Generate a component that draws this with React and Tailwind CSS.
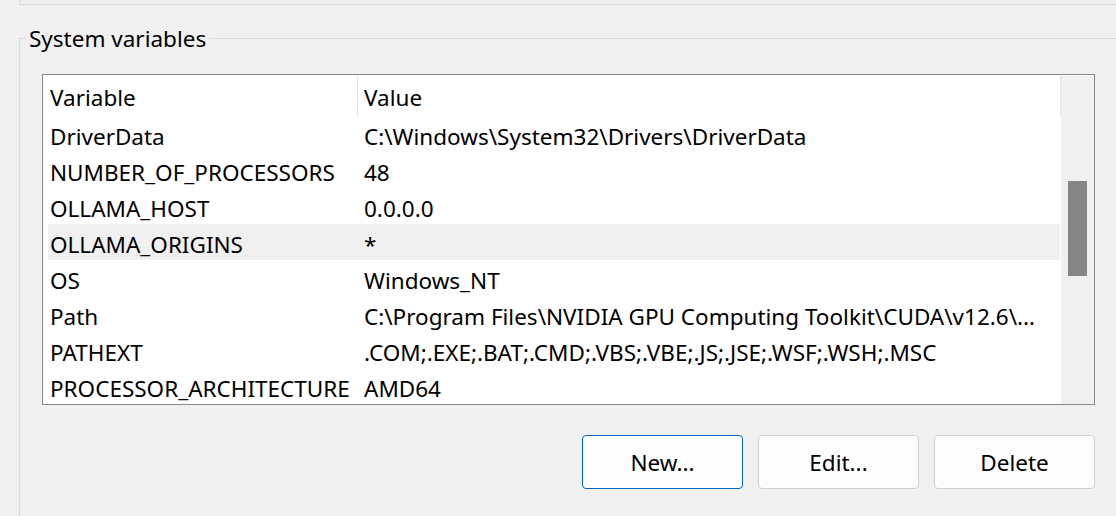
import React from 'react';

const rows = [
  ['DriverData', 'C:\\Windows\\System32\\Drivers\\DriverData'],
  ['NUMBER_OF_PROCESSORS', '48'],
  ['OLLAMA_HOST', '0.0.0.0'],
  ['OLLAMA_ORIGINS', '*'],
  ['OS', 'Windows_NT'],
  ['Path', 'C:\\Program Files\\NVIDIA GPU Computing Toolkit\\CUDA\\v12.6\\...'],
  ['PATHEXT', '.COM;.EXE;.BAT;.CMD;.VBS;.VBE;.JS;.JSE;.WSF;.WSH;.MSC'],
  ['PROCESSOR_ARCHITECTURE', 'AMD64'],
];

function Button({ children, primary }) {
  return (
    <button
      className={
        'w-[161px] h-[54px] pt-[3px] rounded-[4px] bg-[#fdfdfd] text-[22.5px] leading-none text-black border ' +
        (primary ? 'border-[#0067c0]' : 'border-[#d0d0d0]')
      }
    >
      {children}
    </button>
  );
}

export default function App() {
  return (
    <div className="w-[1116px] h-[516px] overflow-hidden bg-[#f0f0f0] text-black font-['Noto_Sans',sans-serif]">
      {/* bottom edge of the group above */}
      <div className="ml-[19px] h-[5px] border-l border-b border-[#dcdcdc]" />

      <div className="relative ml-[19px] mt-[33px] h-[600px] border-l border-t border-[#dcdcdc]">
        <span className="absolute left-[6px] top-[-15px] px-[3px] bg-[#f0f0f0] text-[22.5px] leading-[30px]">
          System variables
        </span>

        <div className="ml-[22px] mt-[35px] w-[1053px] h-[331px] border border-[#828790] bg-white flex overflow-hidden">
          <div className="flex-1 pl-[5px] flex flex-col">
            <div className="flex h-[41px] shrink-0 text-[22.5px] leading-[30px]">
              <div className="w-[309px] pl-[2px] pt-[8px]">Variable</div>
              <div className="w-px bg-[#e5e5e5] mt-[1px] h-[40px]" />
              <div className="flex-1 pl-[6px] pt-[8px]">Value</div>
              <div className="w-px bg-[#e5e5e5] mt-[1px] h-[40px]" />
            </div>
            {rows.map(([k, v], i) => (
              <div
                key={k}
                className={
                  'flex h-[36px] shrink-0 items-center text-[22.5px] leading-[30px] mr-[1px] ' +
                  (i === 3 ? 'bg-[#f0f0f0]' : '')
                }
              >
                <div className="w-[310px] pl-[2px] pt-[5px] whitespace-nowrap">{k}</div>
                <div className="flex-1 pl-[6px] pt-[5px] whitespace-nowrap">{v}</div>
              </div>
            ))}
          </div>
          <div className="w-[33px] mt-[1px] bg-[#f0f0f0] shrink-0 pt-[105px] pl-[7px]">
            <div className="w-[19px] h-[95px] bg-[#858585]" />
          </div>
        </div>

        <div className="flex gap-[15px] ml-[562px] mt-[30px]">
          <Button primary>New...</Button>
          <Button>Edit...</Button>
          <Button>Delete</Button>
        </div>
      </div>
    </div>
  );
}
